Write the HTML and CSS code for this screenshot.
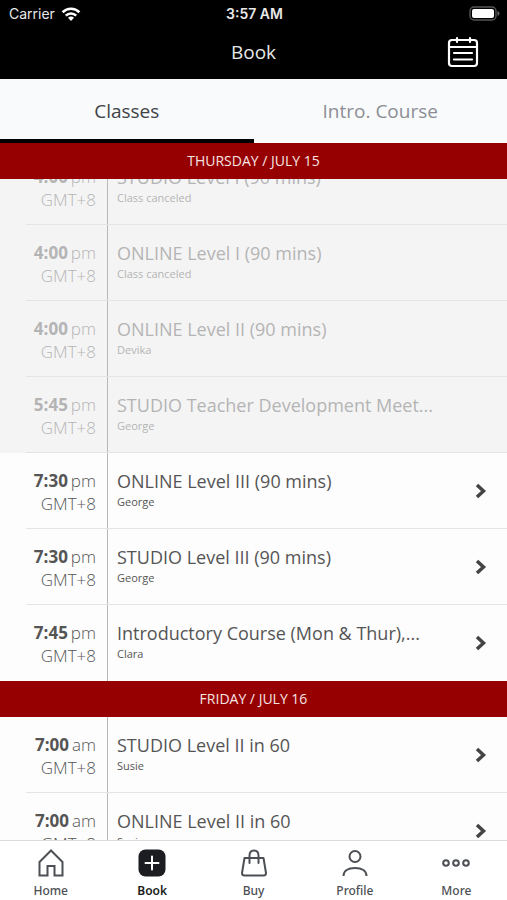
FILE: index.html
```html
<!DOCTYPE html>
<html lang="en">

<head>
    <meta charset="UTF-8">
    <meta name="viewport" content="width=device-width, initial-scale=1.0">
    <title>Book</title>
    <link rel="stylesheet" href="styles.css">
</head>

<body>
    <header>
        <div class="status-bar">
            <span class="carrier">Carrier
                <svg width="20" height="14" viewBox="0 0 20 14" fill="none" stroke="#fff" stroke-width="2.6">
                    <path d="M1.6 5.2a12 12 0 0 1 16.8 0" />
                    <path d="M4.8 8.6a7.4 7.4 0 0 1 10.4 0" />
                    <path d="M10 14l-3-3.2a4.2 4.2 0 0 1 6 0z" fill="#fff" stroke="none" />
                </svg>
            </span>
            <span class="clock">3:57 AM</span>
            <svg class="battery" width="31" height="15" viewBox="0 0 31 15">
                <rect x="1" y="1" width="26" height="13" rx="4" fill="none" stroke="#555" stroke-width="1.4" />
                <rect x="3" y="3" width="22" height="9" rx="2" fill="#fff" />
                <path d="M28.5 5q2 .8 2 2.5t-2 2.5z" fill="#666" />
            </svg>
        </div>
        <div class="title-bar">
            <h1>Book</h1>
            <button class="calendar" aria-label="Calendar">
                <svg width="32" height="32" viewBox="0 0 32 32" fill="none" stroke="#fff" stroke-width="2.2" stroke-linecap="round">
                    <rect x="2" y="4" width="28" height="26" rx="3" />
                    <path d="M2 11h28M10 2v4M23 2v4M7 17h18M7 23.5h18" />
                </svg>
            </button>
        </div>
    </header>

    <nav class="tabs">
        <a href="#classes" class="active">Classes</a>
        <a href="#intro">Intro. Course</a>
    </nav>

    <main id="classes">
        <h2>THURSDAY / JULY 15</h2>
        <ul>
            <li class="past">
                <div class="row">
                    <div class="time"><b>4:00</b>pm<br>GMT+8</div>
                    <div class="info">
                        <h3>STUDIO Level I (90 mins)</h3>
                        <p>Class canceled</p>
                    </div>
                </div>
            </li>
            <li class="past">
                <div class="row">
                    <div class="time"><b>4:00</b>pm<br>GMT+8</div>
                    <div class="info">
                        <h3>ONLINE Level I (90 mins)</h3>
                        <p>Class canceled</p>
                    </div>
                </div>
            </li>
            <li class="past">
                <div class="row">
                    <div class="time"><b>4:00</b>pm<br>GMT+8</div>
                    <div class="info">
                        <h3>ONLINE Level II (90 mins)</h3>
                        <p>Devika</p>
                    </div>
                </div>
            </li>
            <li class="past">
                <div class="row">
                    <div class="time"><b>5:45</b>pm<br>GMT+8</div>
                    <div class="info">
                        <h3>STUDIO Teacher Development Meet...</h3>
                        <p>George</p>
                    </div>
                </div>
            </li>
            <li>
                <a href="#" class="row">
                    <div class="time"><b>7:30</b>pm<br>GMT+8</div>
                    <div class="info">
                        <h3>ONLINE Level III (90 mins)</h3>
                        <p>George</p>
                    </div>
                    <svg class="chevron" viewBox="0 0 12 16"><path d="M2 2l6.5 6L2 14" /></svg>
                </a>
            </li>
            <li>
                <a href="#" class="row">
                    <div class="time"><b>7:30</b>pm<br>GMT+8</div>
                    <div class="info">
                        <h3>STUDIO Level III (90 mins)</h3>
                        <p>George</p>
                    </div>
                    <svg class="chevron" viewBox="0 0 12 16"><path d="M2 2l6.5 6L2 14" /></svg>
                </a>
            </li>
            <li>
                <a href="#" class="row">
                    <div class="time"><b>7:45</b>pm<br>GMT+8</div>
                    <div class="info">
                        <h3>Introductory Course (Mon &amp; Thur),...</h3>
                        <p>Clara</p>
                    </div>
                    <svg class="chevron" viewBox="0 0 12 16"><path d="M2 2l6.5 6L2 14" /></svg>
                </a>
            </li>
        </ul>
        <h2>FRIDAY / JULY 16</h2>
        <ul>
            <li>
                <a href="#" class="row">
                    <div class="time"><b>7:00</b>am<br>GMT+8</div>
                    <div class="info">
                        <h3>STUDIO Level II in 60</h3>
                        <p>Susie</p>
                    </div>
                    <svg class="chevron" viewBox="0 0 12 16"><path d="M2 2l6.5 6L2 14" /></svg>
                </a>
            </li>
            <li>
                <a href="#" class="row">
                    <div class="time"><b>7:00</b>am<br>GMT+8</div>
                    <div class="info">
                        <h3>ONLINE Level II in 60</h3>
                        <p>Susie</p>
                    </div>
                    <svg class="chevron" viewBox="0 0 12 16"><path d="M2 2l6.5 6L2 14" /></svg>
                </a>
            </li>
        </ul>
    </main>

    <nav class="bottom-nav">
        <a href="#home">
            <svg viewBox="0 0 28 28"><path d="M2.5 13L14 1.5 25.500 13v13.500h-8V17h-7v9.500h-8z" /></svg>
            Home
        </a>
        <a href="#book" class="active">
            <svg viewBox="0 0 28 28">
                <rect x="0.5" y="0.5" width="27" height="27" rx="7" fill="#1b1d20" stroke="none" />
                <path d="M14 7.5v13M7.5 14h13" stroke="#fff" stroke-linecap="round" />
            </svg>
            Book
        </a>
        <a href="#buy">
            <svg viewBox="0 0 28 28">
                <path d="M4.5 9h19l2.5 15q0 2.500-2.500 2.500h-19Q2 26.500 2 24z" stroke-linejoin="round" />
                <path d="M9.5 14V6.500q0-5 4.500-5t4.500 5V14" stroke-linecap="round" />
            </svg>
            Buy
        </a>
        <a href="#profile">
            <svg viewBox="0 0 28 28">
                <circle cx="14" cy="7.5" r="5.5" />
                <path d="M2.5 27c0-5 4.500-8 11.500-8s11.500 3 11.500 8" />
            </svg>
            Profile
        </a>
        <a href="#more">
            <svg viewBox="0 0 28 28">
                <circle cx="4" cy="14" r="2.8" />
                <circle cx="14" cy="14" r="2.8" />
                <circle cx="24" cy="14" r="2.8" />
            </svg>
            More
        </a>
    </nav>

    <script>
        document.getElementById('classes').scrollTop = 30;
    </script>
</body>

</html>
```
FILE: styles.css
```css
* {
    box-sizing: border-box;
}

body {
    margin: 0;
    height: 100vh;
    display: flex;
    flex-direction: column;
    font-family: "Open Sans", "Noto Sans", sans-serif;
    background: #fdfdfd;
    color: #555;
}

h1,
h2,
h3,
p,
ul {
    margin: 0;
    padding: 0;
    font-weight: 400;
}

a {
    color: inherit;
    text-decoration: none;
}

header {
    background: #000;
    color: #e8e8e8;
}

.status-bar {
    display: grid;
    grid-template-columns: 1fr auto 1fr;
    align-items: center;
    height: 27px;
    padding: 0 7px 0 9px;
    font-family: Inter, sans-serif;
    font-size: 14px;
}

.carrier {
    display: flex;
    align-items: center;
    gap: 6px;
}

.clock {
    font-weight: 600;
}

.battery {
    justify-self: end;
}

.title-bar {
    display: grid;
    grid-template-columns: 1fr auto 1fr;
    align-items: center;
    height: 52px;
    padding: 0 28px 2px;
}

.title-bar h1 {
    grid-column: 2;
    font-size: 19px;
}

.calendar {
    justify-self: end;
    padding: 0;
    border: none;
    background: none;
    cursor: pointer;
}

.calendar svg {
    display: block;
}

.tabs {
    display: flex;
    height: 64px;
    background: #f8fafc;
}

.tabs a {
    flex: 1;
    padding-top: 3px;
    border-bottom: 4px solid transparent;
    font-size: 19px;
    line-height: 58px;
    text-align: center;
    color: #8c8e94;
}

.tabs .active {
    border-color: #000;
    color: #404246;
}

main {
    flex: 1;
    min-height: 0;
    overflow-y: auto;
    scrollbar-width: none;
}

h2 {
    position: sticky;
    top: 0;
    z-index: 1;
    height: 36px;
    background: #960000;
    color: #f6e4e4;
    font-size: 14px;
    line-height: 36px;
    text-align: center;
}

ul {
    list-style: none;
}

li {
    padding-left: 26px;
}

.row {
    display: flex;
    height: 76px;
    border-bottom: 1px solid #e4e4e4;
}

li:last-child .row {
    border-bottom: none;
}

.past {
    background: #f4f4f4;
    color: #b4b4b4;
}

.time {
    width: 82px;
    padding: 16px 11px 0 0;
    border-right: 1px solid #b8b8b8;
    font-size: 17px;
    font-weight: 300;
    line-height: 23px;
    text-align: right;
}

.time b {
    margin-right: 3px;
    font-weight: 700;
}

.info {
    flex: 1;
    min-width: 0;
    padding: 15px 0 0 9px;
}

.info h3 {
    font-size: 18px;
    line-height: 26px;
    white-space: nowrap;
}

.info p {
    font-size: 11px;
    line-height: 16px;
}

.chevron {
    align-self: center;
    width: 12px;
    height: 16px;
    margin-right: 20px;
    fill: none;
    stroke: #444;
    stroke-width: 3.5;
}

.bottom-nav {
    display: flex;
    height: 60px;
    padding-top: 8px;
    border-top: 1px solid #dcdcdc;
    background: #fff;
    font-family: "Noto Sans", sans-serif;
    font-size: 12px;
    font-weight: 500;
    line-height: 16px;
    color: #4c4f54;
}

.bottom-nav a {
    flex: 1;
    display: flex;
    flex-direction: column;
    align-items: center;
    gap: 6px;
}

.bottom-nav .active {
    color: #1b1d20;
    font-weight: 600;
}

.bottom-nav svg {
    width: 28px;
    height: 28px;
    fill: none;
    stroke: currentColor;
    stroke-width: 2;
}
```
